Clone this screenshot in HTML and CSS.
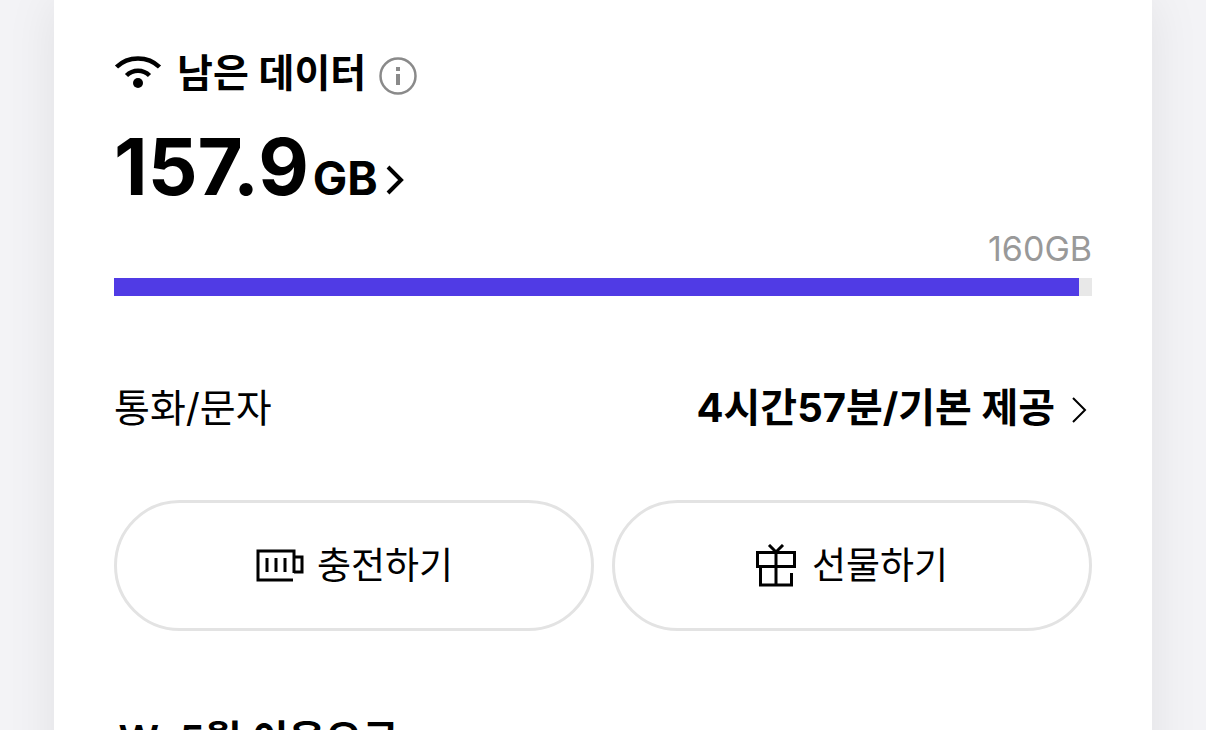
FILE: index.html
```html
<!DOCTYPE html>
<html lang="ko">
<head>
    <meta charset="UTF-8">
    <meta name="viewport" content="width=device-width, initial-scale=1.0">
    <title>남은 데이터</title>
    <link rel="stylesheet" href="styles.css">
</head>
<body>
<main class="card">
    <section class="data">
        <div class="data-title">
            <svg class="icon-wifi" viewBox="0 0 48 36" aria-hidden="true">
                <path d="M2.5 12C14 0.5 34 0.5 45.5 12" fill="none" stroke="#000" stroke-width="4.5"/>
                <path d="M12.5 20.5C19 14 29 14 35.500 20.500" fill="none" stroke="#000" stroke-width="4.5"/>
                <circle cx="24" cy="28" r="5"/>
            </svg>
            <h2>남은 데이터</h2>
            <button class="info-btn" type="button" aria-label="안내">
                <svg viewBox="0 0 38 38" aria-hidden="true">
                    <circle cx="19" cy="19" r="17.5" fill="none" stroke="#8a8a8a" stroke-width="2.5"/>
                    <path d="M17 10h4v4h-4zM17 17h4v11h-4z" fill="#8a8a8a"/>
                </svg>
            </button>
        </div>
        <a class="data-amount" href="#">
            <strong>157.9</strong><span class="unit">GB</span>
            <svg class="icon-arrow-bold" viewBox="0 0 18 30" aria-hidden="true">
                <path d="M2 2l13 13L2 28" fill="none" stroke="#000" stroke-width="4"/>
            </svg>
        </a>
        <div class="data-total">160GB</div>
        <div class="bar"><div class="bar-fill" style="width: 98.7%"></div></div>
    </section>

    <a class="call" href="#">
        <span class="call-label">통화/문자</span>
        <strong class="call-value">4시간57분/기본 제공</strong>
        <svg class="icon-arrow" viewBox="0 0 16 26" aria-hidden="true">
            <path d="M2 1l12 12L2 25" fill="none" stroke="#000" stroke-width="2"/>
        </svg>
    </a>

    <div class="buttons">
        <button class="pill-btn" type="button">
            <svg class="icon-charge" viewBox="0 0 50 34" aria-hidden="true">
                <path d="M38 31H3V2h36v22M39 8h8v15h-8M12 9v14M21 9v14M30 9v14" fill="none" stroke="#000" stroke-width="3"/>
            </svg>
            충전하기
        </button>
        <button class="pill-btn" type="button">
            <svg class="icon-gift" viewBox="0 0 40 44" aria-hidden="true">
                <path d="M1.5 8.5h37v14h-37zM4.5 22v19h31V29M20 8v33M13 1l7 7 7-7" fill="none" stroke="#000" stroke-width="3"/>
            </svg>
            선물하기
        </button>
    </div>

    <section class="bill">
        <span class="won" aria-hidden="true">₩</span>
        <h2>5월 이용요금</h2>
    </section>
</main>
</body>
</html>
```

FILE: styles.css
```css
* {
    box-sizing: border-box;
}

body {
    margin: 0;
    padding: 0 54px;
    background: #f3f3f6;
    color: #000;
    font-family: Inter, "Noto Sans CJK KR", sans-serif;
}

h2 {
    margin: 0;
    font-size: 39px;
    line-height: 50px;
    font-weight: 600;
}

a {
    color: inherit;
    text-decoration: none;
}

button {
    padding: 0;
    border: none;
    background: none;
    color: inherit;
    font-family: inherit;
    cursor: pointer;
}

svg {
    display: block;
    flex: none;
}

.card {
    min-height: 100vh;
    padding: 48px 60px;
    background: #fff;
    box-shadow: 0 0 48px rgba(0, 0, 0, 0.08);
}

.data-title {
    display: flex;
    align-items: center;
}

.icon-wifi {
    width: 48px;
    height: 36px;
    margin-right: 15px;
}

.info-btn {
    margin: 6px 0 0 13px;
}

.info-btn svg {
    width: 38px;
    height: 38px;
}

.data-amount {
    display: flex;
    align-items: baseline;
    margin-top: 21px;
    line-height: 96px;
}

.data-amount strong {
    font-size: 78px;
    font-weight: 700;
}

.unit {
    margin-left: 4px;
    font-size: 46px;
    font-weight: 700;
}

.icon-arrow-bold {
    width: 18px;
    height: 30px;
    margin-left: 8px;
}

.data-total {
    margin-top: 3px;
    color: #999;
    font-size: 34px;
    line-height: 40px;
    text-align: right;
}

.bar {
    height: 18px;
    margin-top: 9px;
    background: #e8e8e8;
}

.bar-fill {
    height: 100%;
    background: #503be5;
}

.call {
    display: flex;
    align-items: center;
    margin-top: 84px;
    padding-right: 5px;
    font-size: 40px;
    line-height: 56px;
}

.call-label {
    font-size: 39px;
}

.call-value {
    margin-left: auto;
    font-weight: 700;
}

.icon-arrow {
    width: 16px;
    height: 26px;
    margin: 4px 0 0 16px;
}

.buttons {
    display: flex;
    gap: 18px;
    margin-top: 64px;
}

.pill-btn {
    display: flex;
    flex: 1;
    align-items: center;
    justify-content: center;
    gap: 12px;
    height: 131px;
    border: 3px solid #e3e3e3;
    border-radius: 66px;
    font-size: 37px;
    line-height: 48px;
}

.icon-charge {
    width: 50px;
    height: 34px;
}

.icon-gift {
    width: 40px;
    height: 44px;
    margin-right: 4px;
}

.bill {
    display: flex;
    align-items: center;
    gap: 20px;
    margin-top: 84px;
}

.bill h2 {
    font-size: 40px;
}

.won {
    padding-left: 4px;
    font-size: 40px;
    line-height: 50px;
    font-weight: 700;
}
```
